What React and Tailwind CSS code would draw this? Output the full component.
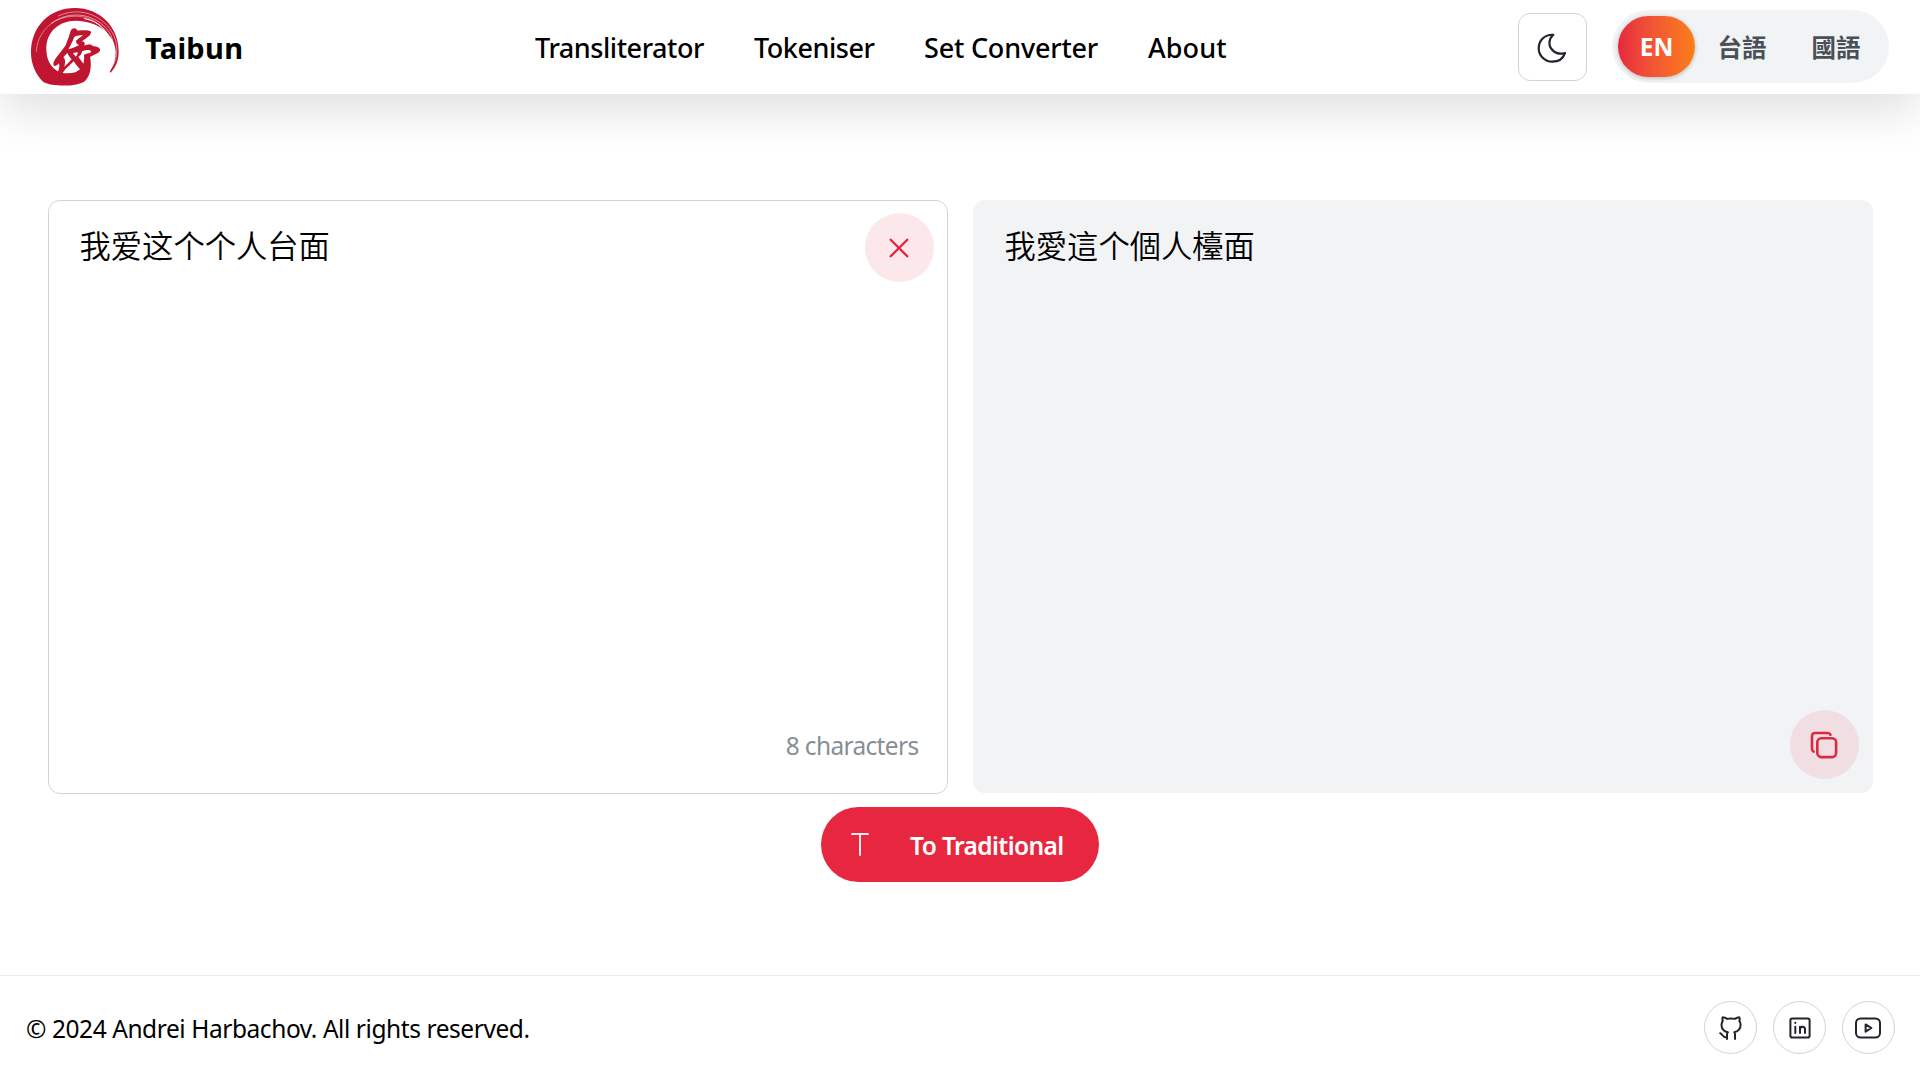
const navItems = [
  { label: "Transliterator", cls: "w-[169px] tracking-[-0.44px]" },
  { label: "Tokeniser", cls: "w-[120px] tracking-[-0.46px]" },
  { label: "Set Converter", cls: "w-[174px] tracking-[-0.2px]" },
  { label: "About", cls: "w-[80px] tracking-[0.1px]" },
];

const sans = "font-['Noto_Sans','Noto_Sans_CJK_SC',sans-serif]";

function Logo() {
  return (
    <svg viewBox="0 0 294 258" className="h-[86px] w-[98px]" fill="none" stroke="#c01530" strokeLinecap="round" strokeLinejoin="round">
      <path
        fill="#c01530"
        stroke="none"
        d="M52 234C30 212 15 181 15 146C15 66 72 12 147 12C222 12 278 69 278 142C278 168 271 188 254 206L251 203C264 184 270 164 269 142C267 92 215 50 149 50C99 50 61 83 61 134C61 174 82 206 122 208C160 209 178 188 174 152L190 146C198 180 196 210 178 230C154 250 78 248 52 234Z"
      />
      <g stroke="#ffffff" strokeWidth="2.2">
        <path d="M31 142C34 88 74 42 138 37C194 33 240 64 252 116" strokeOpacity="0.6" />
        <path d="M76 58C134 14 213 31 249 84C266 109 268 151 255 190" strokeOpacity="0.75" />
        <path d="M97 36C158 7 226 31 258 84C277 116 277 157 260 187" strokeOpacity="0.75" strokeWidth="2" />
        <path d="M176 44C215 50 248 80 257 121C262 143 262 158 258 177" strokeWidth="3" />
      </g>
      <path
        fill="#c01530"
        fillRule="evenodd"
        stroke="none"
        d="M134 80C140 70 152 72 153 79C164 81 182 76 194 82C199 91 185 100 168 112C176 113 178 119 175 125C190 120 197 121 201 127C214 127 225 133 222 141C215 150 202 152 190 160C186 154 191 148 196 142C189 135 178 138 168 142C168 150 163 155 157 159C164 168 172 178 177 187L173 204C162 197 152 186 143 172C132 183 119 194 112 204C106 215 92 213 96 203C100 195 101 186 99 178C88 190 79 187 83 175C89 160 107 142 119 124C125 109 130 94 134 80ZM145 98C140 113 133 125 127 136C137 134 151 128 159 124C153 120 149 115 150 110C157 104 165 99 171 93C162 93 153 96 145 98ZM124 147C119 152 115 156 112 160C119 165 118 178 115 188C123 181 131 173 137 166C132 161 128 155 124 147ZM141 147C144 152 147 155 150 158C153 154 155 150 155 145Z"
      />
    </svg>
  );
}

function MoonIcon() {
  return (
    <svg viewBox="0 0 30 30" className="mt-[2px] mr-px size-[30px]" fill="none" stroke="#212529" strokeWidth="2.2" strokeLinejoin="round">
      <path d="M16.3 1.8C11.5 6.1 11.1 13 15.5 17.1C18.8 20.4 23.4 21.4 28 20.1C26 25.8 20.8 28.7 15.2 28.7C7.8 28.7 1.7 22.7 1.7 15.2C1.7 7.3 8.1 1.2 16.3 1.8Z" />
    </svg>
  );
}

const iconProps = {
  fill: "none",
  stroke: "#212529",
  strokeWidth: 2,
  strokeLinecap: "round",
  strokeLinejoin: "round",
};

function GithubIcon() {
  return (
    <svg viewBox="0 0 24 24" className="size-6" {...iconProps}>
      <path d="M8 23V18.2C8 17.4 8.3 16.8 8.9 16.3C5.2 15.4 2.5 13.2 2.5 8.7C2.5 7.2 3 5.9 3.8 4.9C3.2 3.4 3.3 2.1 3.7 1.2C5.4 1.2 7 2 8.3 2.9C10.8 2.3 13.3 2.3 15.8 2.9C17.1 2 18.7 1.2 20.3 1.2C20.8 2.1 20.9 3.4 20.3 4.9C21.1 5.9 21.6 7.2 21.6 8.7C21.6 13.2 18.9 15.4 15.3 16.3C15.8 16.8 16 17.4 16 18.2V23M8 21.4C3.6 21.9 4 18.5 1.2 17.2" />
    </svg>
  );
}

function LinkedinIcon() {
  return (
    <svg viewBox="0 0 24 24" className="size-6" {...iconProps}>
      <rect x="2.4" y="2.4" width="19.2" height="19.2" rx="1.8" />
      <path d="M7.3 10.8V17M7.3 6.8V7M12 17V10.8M12 13.4C12 11.8 13 10.8 14.5 10.8C16 10.8 17 11.8 17 13.4V17" />
    </svg>
  );
}

function YoutubeIcon() {
  return (
    <svg viewBox="0 0 28 24" className="mr-px h-6 w-7" {...iconProps}>
      <rect x="2" y="2.4" width="24" height="19.2" rx="4.6" />
      <path d="M11.6 8.4L17.4 12L11.6 15.6Z" />
    </svg>
  );
}

function SocialLink({ label, children }) {
  return (
    <a aria-label={label} className="flex size-[53px] items-center justify-center rounded-full border border-[#ced4da]">
      {children}
    </a>
  );
}

export default function App() {
  return (
    <div className={`flex h-[1080px] w-[1920px] flex-col overflow-hidden bg-white text-black ${sans}`}>
      <header className="flex h-[94px] shrink-0 items-center bg-white pr-[31px] pl-[26px] shadow-[0_16px_48px_rgba(0,0,0,0.13)]">
        <Logo />
        <span className="ml-[21px] w-[390px] pt-px text-[29px] leading-10 font-bold tracking-[0.3px]">Taibun</span>
        <nav className="flex gap-[50px] pt-[2px] text-[27px] leading-10 font-medium whitespace-nowrap">
          {navItems.map((n) => (
            <a key={n.label} className={n.cls}>{n.label}</a>
          ))}
        </nav>
        <div className="ml-auto flex items-center pb-px">
          <button aria-label="Dark mode" className="flex h-[68px] w-[69px] items-center justify-center rounded-xl border border-[#ced4da]">
            <MoonIcon />
          </button>
          <div className="ml-[25px] flex h-[73px] w-[277px] items-center rounded-full bg-[#f1f3f5] pl-[6px] text-[24.5px] font-bold text-[#495057]">
            <span className="flex h-[61px] w-[77px] items-center justify-center rounded-full bg-gradient-to-r from-[#e6263e] to-[#fd7e14] pt-[2px] text-white shadow-[0_1px_4px_rgba(0,0,0,0.25)]">
              EN
            </span>
            <span className="w-[94px] pt-[4px] text-center">台語</span>
            <span className="w-[94px] pt-[4px] text-center">國語</span>
          </div>
        </div>
      </header>

      <main className="flex h-[881px] shrink-0 flex-col items-center px-12 pt-[106px]">
        <div className="grid w-[1825px] grid-cols-[900px_900px] gap-[25px]">
          <section className="flex h-[594px] flex-col justify-between rounded-xl border border-[#ced4da] bg-white">
            <div className="flex justify-between pt-[12px] pr-[13px] pl-[31px]">
              <p className="pt-[10px] text-[31.3px] leading-[46px] font-[350]">我爱这个个人台面</p>
              <button aria-label="Clear" className="flex size-[69px] items-center justify-center rounded-full bg-[#fce8eb]">
                <svg viewBox="0 0 20 20" className="size-5" fill="none" stroke="#e2233f" strokeWidth="2.3" strokeLinecap="round">
                  <path d="M1.7 1.7L18.3 18.3M18.3 1.7L1.7 18.3" />
                </svg>
              </button>
            </div>
            <p className="pr-[28px] pb-[27px] text-right text-[24.5px] leading-10 tracking-[-0.66px] text-[#868e96]">8 characters</p>
          </section>
          <section className="flex h-[593px] flex-col justify-between rounded-xl bg-[#f1f3f5]">
            <p className="pt-[23px] pl-[32px] text-[31.3px] leading-[46px] font-[350]">我愛這个個人檯面</p>
            <button aria-label="Copy" className="mr-[14px] mb-[14px] flex size-[69px] items-center justify-center self-end rounded-full bg-[#f0dee2]">
              <svg viewBox="0 0 28 28" className="size-7" fill="none" stroke="#dc2a42" strokeWidth="2.6" strokeLinecap="round">
                <rect x="7.3" y="7.3" width="18.8" height="18.8" rx="4" />
                <path d="M3.6 20.6C2.6 20 2 19.2 2 18V5C2 3 3.2 2 5 2H17.8C19.2 2 20.1 2.6 20.5 3.7" />
              </svg>
            </button>
          </section>
        </div>
        <button className="mt-[13px] flex h-[75px] w-[278px] items-center rounded-full bg-[#e72740] pl-[29px] text-white">
          <svg viewBox="0 0 20 24" className="mb-px h-6 w-5" fill="none" stroke="#ffe9ec" strokeWidth="2" strokeLinecap="round">
            <path d="M2 2H18M10 2V23" />
          </svg>
          <span className="ml-[40px] pt-[2px] text-[24.5px] leading-10 font-semibold tracking-[-0.6px] whitespace-nowrap">To Traditional</span>
        </button>
      </main>

      <footer className="flex h-[105px] shrink-0 items-center justify-between border-t border-[#e9ecef] pr-[25px] pb-px pl-[26px]">
        <p className="pt-[3px] text-[24.5px] leading-10 tracking-[-0.43px]">© 2024 Andrei Harbachov. All rights reserved.</p>
        <div className="flex gap-4">
          <SocialLink label="GitHub"><GithubIcon /></SocialLink>
          <SocialLink label="LinkedIn"><LinkedinIcon /></SocialLink>
          <SocialLink label="YouTube"><YoutubeIcon /></SocialLink>
        </div>
      </footer>
    </div>
  );
}
